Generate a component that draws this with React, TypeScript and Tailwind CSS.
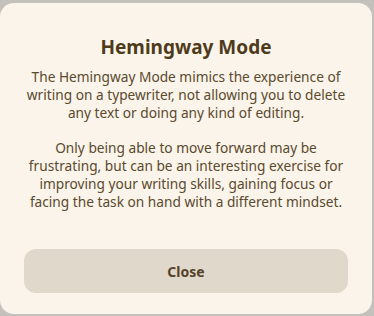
export default function App() {
  return (
    <div className="w-[374px] h-[316px] bg-[#c4c1bc] pt-[3px] pr-[2px] overflow-hidden">
      <div
        className="h-[311px] w-[372px] rounded-[14px] bg-[#faf4ea] flex flex-col items-center px-[22px] pt-[32px] text-[#5a4a2e]"
        style={{ fontFamily: '"Noto Sans", "Open Sans", sans-serif' }}
      >
        <h1 className="text-[19px] leading-[24px] font-bold text-[#4e3b1c]">Hemingway Mode</h1>
        <div className="mt-[9px] text-center text-[13.7px] leading-[18px]">
          <p>
            The Hemingway Mode mimics the experience of writing on a typewriter, not allowing you to
            delete any text or doing any kind of editing.
          </p>
          <p className="mt-[17px]">
            Only being able to move forward may be frustrating, but can be an interesting exercise for
            improving your writing skills, gaining focus or facing the task on hand with a different
            mindset.
          </p>
        </div>
        <button className="mt-[38px] h-[44px] w-[324px] rounded-[12px] bg-[#e0d8cb] text-[14px] font-bold text-[#55432a]">
          Close
        </button>
      </div>
    </div>
  );
}
